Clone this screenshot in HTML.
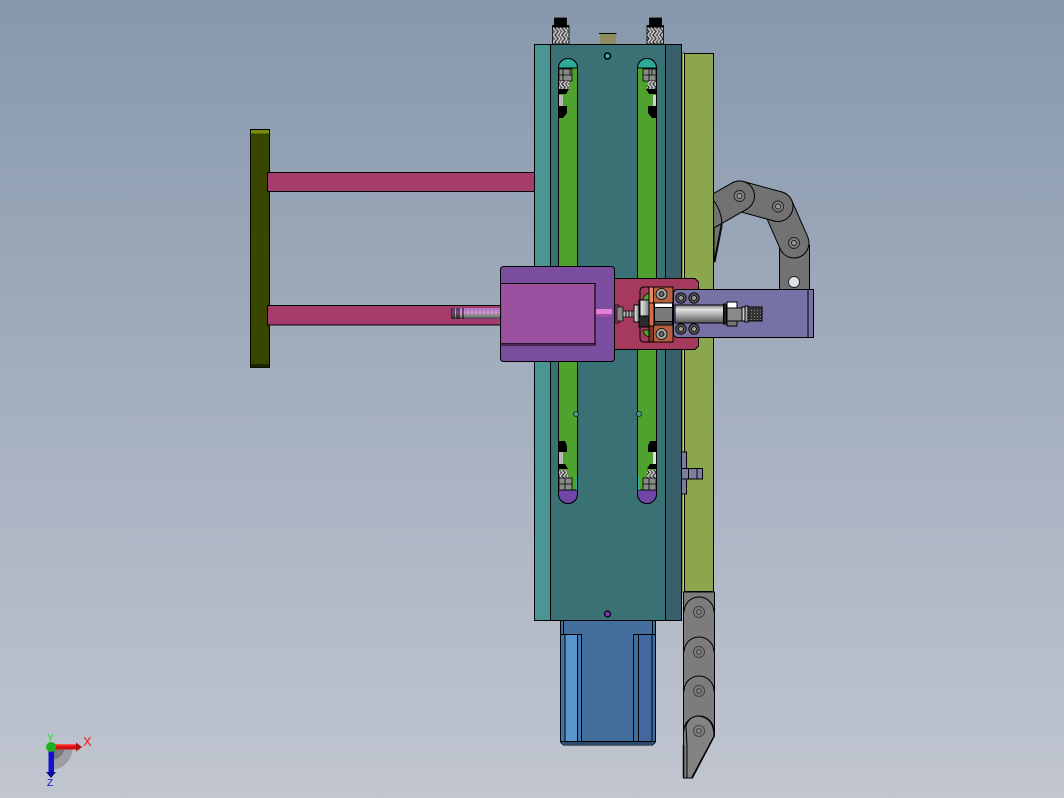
<!DOCTYPE html>
<html><head><meta charset="utf-8"><style>
html,body{margin:0;padding:0;width:1064px;height:798px;overflow:hidden;background:#a4aebd}
svg{display:block}
</style></head><body>
<svg width="1064" height="798" viewBox="0 0 1064 798" xmlns="http://www.w3.org/2000/svg">
<defs>
<linearGradient id="bg" x1="0" y1="0" x2="0" y2="1"><stop offset="0" stop-color="#8798ad"/><stop offset="1" stop-color="#c1c6d0"/></linearGradient>
<linearGradient id="rod" x1="0" y1="0" x2="0" y2="1"><stop offset="0" stop-color="#777"/><stop offset=".25" stop-color="#e4e4e4"/><stop offset=".6" stop-color="#a0a0a0"/><stop offset="1" stop-color="#555"/></linearGradient>
<linearGradient id="rod2" x1="0" y1="0" x2="1" y2="0"><stop offset="0" stop-color="#eee"/><stop offset=".5" stop-color="#bbb"/><stop offset="1" stop-color="#777"/></linearGradient>
<linearGradient id="thr" x1="0" y1="0" x2="0" y2="1"><stop offset="0" stop-color="#b070c0"/><stop offset=".4" stop-color="#e090e8"/><stop offset=".7" stop-color="#8a8f88"/><stop offset="1" stop-color="#553355"/></linearGradient>
<pattern id="knurl" width="7" height="7" patternUnits="userSpaceOnUse"><rect width="7" height="7" fill="#6a6a6a"/><path d="M0 0L3.500 3.500L0 7M3.500 0L7 3.500L3.500 7" stroke="#d8d8d8" stroke-width="1" fill="none"/><path d="M2 0L5 3.500L2 7" stroke="#222" stroke-width=".7" fill="none"/></pattern>
<pattern id="kn2" width="3" height="3" patternUnits="userSpaceOnUse"><rect width="3" height="3" fill="#333"/><rect x="1" y="1" width="1" height="1" fill="#888"/></pattern>
</defs>
<rect width="1064" height="798" fill="url(#bg)"/>

<!-- top screws -->
<g stroke="#000" stroke-width=".8">
<rect x="552.500" y="27" width="16.500" height="17" fill="url(#knurl)"/>
<rect x="647" y="27" width="16.500" height="17" fill="url(#knurl)"/>
<rect x="554.500" y="18" width="12" height="8" fill="#000"/>
<rect x="552.500" y="25.500" width="16.500" height="1.500" fill="#000"/>
<rect x="649.500" y="18" width="12" height="8" fill="#000"/>
<rect x="647" y="25.500" width="16.500" height="1.500" fill="#000"/>
</g>
<rect x="600" y="33.500" width="16" height="10.500" fill="#8f8c60"/>
<path d="M599 33.500H616.500" stroke="#000" stroke-width="1"/>

<!-- upper chain (link 4, 3, 2, 1 bottom to top) -->
<g fill="none" stroke-linecap="round">
<rect x="779.500" y="245" width="30" height="45" fill="#727272" stroke="#000" stroke-width="1"/>
<path d="M794 243L778 206.500" stroke="#000" stroke-width="31"/><path d="M794 243L778 206.500" stroke="#727272" stroke-width="29"/>
<path d="M778 206.500L739.500 196" stroke="#000" stroke-width="31"/><path d="M778 206.500L739.500 196" stroke="#727272" stroke-width="29"/>
<path d="M714 208Q720 216 721 226L714 262Z" fill="#727272" stroke="#000" stroke-width="1"/>
<path d="M739.500 196L708 214" stroke="#000" stroke-width="31"/><path d="M739.500 196L708 214" stroke="#727272" stroke-width="29"/>
<path d="M714 201Q722 212 722 226L715 262" stroke="#000" stroke-width="1"/>
</g>
<g stroke="#222" stroke-width=".9">
<circle cx="739.500" cy="196" r="5.500" fill="#7d7d7d"/><circle cx="739.500" cy="196" r="2.500" fill="#999"/>
<circle cx="778" cy="206.500" r="5.500" fill="#7d7d7d"/><circle cx="778" cy="206.500" r="2.500" fill="#999"/>
<circle cx="794" cy="243" r="5.500" fill="#7d7d7d"/><circle cx="794" cy="243" r="2.500" fill="#999"/>
<circle cx="794" cy="282" r="5.500" fill="#dfe3ea"/>
</g>

<!-- rails -->
<rect x="682" y="53" width="3" height="539" fill="#c5d468" stroke="#000" stroke-width=".6"/>
<rect x="684.500" y="53.500" width="29" height="538" fill="#8ca650" stroke="#000" stroke-width="1"/>

<!-- lower chain -->
<g stroke="#000" stroke-width="1" fill="#7c7c7c">
<path d="M683.500 592H714.500V736L692.500 778H683.500Z"/>
<g fill="none">
<path d="M684 612A15 15 0 0 1 714 612"/>
<path d="M684 652A15 15 0 0 1 714 652"/>
<path d="M684 691A15 15 0 0 1 714 691"/>
<path d="M684 731A15 15 0 0 1 714 731"/>
</g>
<path d="M686 726Q689 716 699 716Q714 718 714 736L691.500 778H687V745Z" fill="#838383"/>
<path d="M683.500 745V778" fill="none" stroke-width="1.500"/>
</g>
<g stroke="#333" stroke-width=".8" fill="none">
<circle cx="699" cy="612" r="5.500"/><circle cx="699" cy="612" r="2.500"/>
<circle cx="699" cy="652" r="5.500"/><circle cx="699" cy="652" r="2.500"/>
<circle cx="699" cy="691" r="5.500"/><circle cx="699" cy="691" r="2.500"/>
<circle cx="699" cy="731" r="5.500"/><circle cx="699" cy="731" r="2.500"/>
</g>

<!-- motor -->
<path d="M560.500 620H655.500V742L652.500 745H563.500L560.500 742Z" fill="#446f9d" stroke="#000" stroke-width="1"/>
<rect x="561" y="634" width="21" height="108" fill="#4278ae"/>
<rect x="565" y="634" width="12.500" height="108" fill="#5896cd"/>
<rect x="633" y="634" width="22" height="108" fill="#3f6f9f"/>
<rect x="638" y="634" width="14" height="108" fill="#43689f"/>
<path d="M563.500 620V634M652.500 620V634M560.500 634.500H581.500V745M565 634V742M577.500 634V745M633.500 745V634.500H655.500M638.500 634V742M652 634V742" stroke="#000" stroke-width="1" fill="none"/>
<path d="M561 741.500H655" stroke="#000" stroke-width="1"/>
<rect x="564" y="742" width="88" height="3" fill="#2a4a6e"/>

<!-- main body -->
<rect x="534.500" y="44.500" width="147" height="576" fill="#3a7174" stroke="#000" stroke-width="1"/>
<rect x="535" y="45" width="15" height="575" fill="#4a9694"/>
<rect x="666" y="45" width="15" height="575" fill="#385f6a"/>
<path d="M550.500 44V620M665.500 44V620" stroke="#000" stroke-width="1"/>

<!-- slots -->
<g stroke="#000" stroke-width="1">
<path d="M558.500 68A9.500 9.500 0 0 1 577.500 68V494A9.500 9.500 0 0 1 558.500 494Z" fill="#4fa22e"/>
<path d="M637.500 68A9.500 9.500 0 0 1 656.500 68V494A9.500 9.500 0 0 1 637.500 494Z" fill="#4fa22e"/>
<path d="M558.500 68A9.500 9.500 0 0 1 577.500 68Z" fill="#2faa98"/>
<path d="M637.500 68A9.500 9.500 0 0 1 656.500 68Z" fill="#2faa98"/>
<path d="M558.500 490H577.500V494A9.500 9.500 0 0 1 558.500 494Z" fill="#7246a8"/>
<path d="M637.500 490H656.500V494A9.500 9.500 0 0 1 637.500 494Z" fill="#7246a8"/>
</g>

<!-- slot bolts -->
<g>
<rect x="559" y="69" width="13" height="12" fill="#8a8a8a" stroke="#000" stroke-width=".8"/>
<path d="M559 75H572M563 69V81M570 69V75" stroke="#000" stroke-width=".8"/>
<rect x="559" y="81" width="10" height="8" fill="url(#knurl)"/>
<path d="M559 89H569L566 94H559Z" fill="#000"/>
<rect x="559" y="95" width="4" height="11" fill="#b8b8b8"/>
<path d="M559 106H567V113L563 118H559Z" fill="#000"/>
<rect x="643" y="69" width="13" height="12" fill="#8a8a8a" stroke="#000" stroke-width=".8"/>
<path d="M643 75H656M649 69V81M652 69V75" stroke="#000" stroke-width=".8"/>
<rect x="647" y="81" width="9" height="8" fill="url(#knurl)"/>
<path d="M646 89H656V94H649Z" fill="#000"/>
<rect x="653" y="95" width="3" height="11" fill="#d0d0d0"/>
<path d="M648 106H656V118H652L648 113Z" fill="#000"/>
<path d="M559 441H565L567 446V452H559Z" fill="#000"/>
<rect x="559" y="452" width="4" height="12" fill="#b8b8b8"/>
<path d="M559 464H565L568 469H559Z" fill="#000"/>
<rect x="559" y="470" width="9" height="8" fill="url(#knurl)"/>
<rect x="559" y="478" width="13" height="12" fill="#8a8a8a" stroke="#000" stroke-width=".8"/>
<path d="M559 484H572M565 478V490" stroke="#000" stroke-width=".8"/>
<path d="M656 441H650L648 446V452H656Z" fill="#000"/>
<rect x="653" y="452" width="3" height="12" fill="#ddd"/>
<path d="M656 464H650L647 469H656Z" fill="#000"/>
<rect x="647" y="470" width="9" height="8" fill="url(#knurl)"/>
<rect x="643" y="478" width="13" height="12" fill="#8a8a8a" stroke="#000" stroke-width=".8"/>
<path d="M643 484H656M649 478V490" stroke="#000" stroke-width=".8"/>
<rect x="638" y="476" width="2" height="14" fill="#2faa98"/>
<rect x="576" y="476" width="1" height="14" fill="#2faa98"/>
</g>

<!-- small holes -->
<circle cx="607.500" cy="56" r="3" fill="#2ab8b8" stroke="#000" stroke-width="1.600"/>
<circle cx="607.500" cy="614" r="3" fill="#7240a8" stroke="#000" stroke-width="1.200"/>
<circle cx="576" cy="414" r="2.500" fill="#4a9a8a" stroke="#000" stroke-width=".6"/>
<circle cx="639" cy="414" r="2.500" fill="#4a9a8a" stroke="#000" stroke-width=".6"/>

<!-- bolt on right rail -->
<g stroke="#000" stroke-width="1" fill="#7c7ea0">
<rect x="681.500" y="452" width="5" height="42"/>
<rect x="681.500" y="468.500" width="21" height="10.500"/>
<path d="M688.500 468.500V479M697 468.500V479" fill="none"/>
</g>

<!-- left plate & bars -->
<rect x="250.500" y="129.500" width="19" height="238" fill="#394600" stroke="#000" stroke-width="1"/>
<rect x="251" y="130" width="18" height="3.500" fill="#7a8c10"/>
<rect x="251" y="364" width="18" height="3.500" fill="#1c2400"/>
<rect x="267.500" y="172.500" width="267" height="19" fill="#a63c6c" stroke="#000" stroke-width="1"/>
<rect x="267.500" y="305.500" width="235" height="19.500" fill="#a63c6c" stroke="#000" stroke-width="1"/>

<!-- red plate -->
<path d="M612 278.500H695L698.500 282V346L695 349.500H612Z" fill="#a63a5c" stroke="#000" stroke-width="1"/>

<!-- threaded rod -->
<rect x="452" y="308" width="49" height="11" fill="url(#thr)"/>
<path d="M452 308V319M454 308V319M457 308V319M459 308V319M463 308V319" stroke="#000" stroke-width="1"/>
<path d="M466 309V318M470 309V318M474 309V318M478 309V318M482 309V318M486 309V318M490 309V318M494 309V318M498 309V318" stroke="#6a8a6a" stroke-width="1" opacity=".7"/>

<!-- purple block -->
<path d="M504 266.500H611Q614.500 266.500 614.500 270V358Q614.500 361.500 611 361.500H504Q500.500 361.500 500.500 358V270Q500.500 266.500 504 266.500Z" fill="#7a4d9e" stroke="#000" stroke-width="1"/>
<rect x="501.500" y="283.500" width="93.500" height="61.500" fill="#9c50a0"/>
<path d="M501 283.500H595V345H501" fill="none" stroke="#000" stroke-width="1.100"/>
<path d="M501 343.500H595" stroke="#000" stroke-width=".8"/>

<!-- shaft -->
<rect x="596" y="309" width="16" height="8" fill="#e080d8"/>
<rect x="596" y="314" width="16" height="3" fill="#a050a0"/>
<rect x="615" y="305" width="4" height="18" fill="#a63a5c" stroke="#000" stroke-width=".7"/>
<rect x="617" y="307" width="6" height="14" fill="#888" stroke="#000" stroke-width=".7"/>
<rect x="623" y="311" width="11" height="6" fill="#bbb" stroke="#000" stroke-width=".7"/>
<path d="M626 311V317M629 311V317M632 311V317" stroke="#000"/>

<!-- cylinder plate -->
<path d="M678 289.500H813.500V337.500H678Q673.500 337.500 673.500 333V294Q673.500 289.500 678 289.500Z" fill="#7672a6" stroke="#000" stroke-width="1"/>
<path d="M808 289V338" stroke="#000" stroke-width="1"/>

<!-- clamp -->
<g stroke="#000" stroke-width="1">
<path d="M644 287H673V342H644Q640 342 640 338V291Q640 287 644 287Z" fill="#a63a5c"/>
<path d="M649 293Q643 295 643 300H649Z" fill="#4fa22e" stroke-width=".7"/>
<path d="M649 337Q643 335 643 330H649Z" fill="#4fa22e" stroke-width=".7"/>
<rect x="649" y="287" width="24" height="55" fill="#b5603f"/>
<rect x="649" y="287" width="4.500" height="16" fill="#e88a60"/>
<rect x="649" y="326" width="4.500" height="16" fill="#7a3828"/>
<rect x="634" y="305" width="5" height="17" fill="url(#rod2)"/>
<rect x="639" y="300" width="10" height="27" fill="#2a2a2a"/>
<rect x="640" y="300" width="9" height="16" fill="url(#rod2)"/>
<rect x="649" y="303" width="5" height="23" fill="#d06a50"/>
<rect x="654.500" y="303" width="18" height="22" fill="#7a7a7a"/>
<rect x="654.500" y="303" width="18" height="4.500" fill="#fff"/>
<rect x="654.500" y="321.500" width="18" height="3.500" fill="#444"/>
</g>
<g stroke="#000" stroke-width=".8">
<circle cx="661.500" cy="294" r="5.500" fill="#a5a5a5"/><circle cx="661.500" cy="294" r="2.500" fill="#666"/>
<circle cx="661.500" cy="334" r="5.500" fill="#a5a5a5"/><circle cx="661.500" cy="334" r="2.500" fill="#666"/>
<circle cx="681" cy="298" r="5.200" fill="#555"/><circle cx="681" cy="298" r="2.500" fill="#999"/>
<circle cx="694" cy="298" r="5.200" fill="#555"/><circle cx="694" cy="298" r="2.500" fill="#999"/>
<circle cx="681" cy="329" r="5.200" fill="#555"/><circle cx="681" cy="329" r="2.500" fill="#999"/>
<circle cx="694" cy="329" r="5.200" fill="#555"/><circle cx="694" cy="329" r="2.500" fill="#999"/>
</g>

<!-- cylinder -->
<g stroke="#000" stroke-width="1">
<rect x="675" y="305" width="49" height="18" fill="url(#rod)"/>
<rect x="723.500" y="304" width="3" height="20" fill="#222"/>
<rect x="727" y="302" width="10" height="6" fill="#fff"/>
<rect x="727" y="308" width="15" height="13" fill="#8a8a8a"/>
<rect x="727" y="321" width="10" height="5" fill="#777"/>
<rect x="742" y="307" width="3" height="14" fill="#ccc"/>
<rect x="745" y="306" width="3" height="16" fill="#aaa"/>
<rect x="748" y="307" width="14" height="14" fill="url(#kn2)"/>
</g>

<!-- triad -->
<path d="M51 746H73A22 24 0 0 1 51 770Z" fill="#707070" opacity=".45"/>
<path d="M51 746H65A14 14 0 0 1 51 760Z" fill="#555" opacity=".5"/>
<rect x="52" y="744" width="24" height="5.500" fill="#d81010"/>
<rect x="52" y="744" width="24" height="1.500" fill="#ff5050"/>
<path d="M76 742.500L82 747L76 751.500Z" fill="#b01010"/>
<rect x="48.500" y="749" width="5.500" height="24" fill="#1010d0"/>
<path d="M46 772H56L51 778Z" fill="#0a0a90"/>
<circle cx="51" cy="747" r="5" fill="#20b020"/>
<text x="83" y="746" font-family="Liberation Sans, sans-serif" font-size="13" fill="#e82020">X</text>
<text x="47" y="741" font-family="Liberation Sans, sans-serif" font-size="10" fill="#20e020">Y</text>
<text x="47" y="786" font-family="Liberation Sans, sans-serif" font-size="10" fill="#1010e0">Z</text>
</svg>
</body></html>
